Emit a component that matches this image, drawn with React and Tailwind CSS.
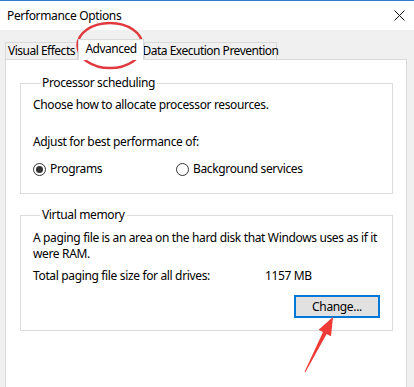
import React from "react";

const Radio = ({ checked, label, className = "" }) => (
  <label className={`flex items-center ${className}`}>
    <span className="w-[13px] h-[13px] rounded-full border border-[#333] bg-white flex items-center justify-center">
      {checked && <span className="w-[7px] h-[7px] rounded-full bg-[#333]"></span>}
    </span>
    <span className="ml-[4px]">{label}</span>
  </label>
);

const Tab = ({ label, active, width }) => (
  <div
    className={
      active
        ? `${width} h-[21px] -mb-px relative z-10 bg-white border border-b-0 border-[#d9d9d9] flex items-start justify-center pt-[1px] whitespace-nowrap tracking-[-0.5px]`
        : `${width} h-[17px] bg-[#f0f0f0] border border-b-0 border-[#d9d9d9] flex items-center justify-center whitespace-nowrap tracking-[-0.5px]`
    }
  >
    {label}
  </div>
);

const App = () => {
  return (
    <div
      className="relative w-[414px] h-[387px] overflow-hidden bg-[#f0f0f0] text-[12px] leading-[16px] tracking-[-0.35px] text-black"
      style={{ fontFamily: '"Noto Sans", "Open Sans", sans-serif' }}
    >
      {/* title bar */}
      <div className="h-[30px] bg-white border-t border-[#2b7bd3] flex items-center justify-between pl-[7px] pr-[9px]">
        <span className="text-[12px] tracking-[-0.35px]">Performance Options</span>
        <svg width="11" height="11" viewBox="0 0 11 11">
          <path d="M0.5 0.5L10.5 10.5M10.5 0.5L0.5 10.5" stroke="#111" strokeWidth="1" />
        </svg>
      </div>

      {/* tabs */}
      <div className="h-[29px] flex items-end pl-[5px]">
        <Tab label="Visual Effects" width="w-[73px]" />
        <Tab label="Advanced" width="w-[66px]" active />
        <Tab label="Data Execution Prevention" width="w-[133px]" />
      </div>

      {/* tab page */}
      <div className="ml-[5px] w-[402px] h-[360px] bg-white border border-[#d9d9d9] px-[14px] pt-[15px]">
        <fieldset className="border border-[#dcdcdc] pl-[12px] pr-[12px] pb-[16px] mr-[-1px]">
          <legend className="ml-[7px] px-[2px]">Processor scheduling</legend>
          <p className="pt-[6px]">Choose how to allocate processor resources.</p>
          <p className="mt-[21px]">Adjust for best performance of:</p>
          <div className="mt-[11px] flex items-center">
            <Radio checked label="Programs" className="w-[143px]" />
            <Radio label="Background services" />
          </div>
        </fieldset>

        <fieldset className="mt-[13px] border border-[#dcdcdc] pl-[12px] pr-[12px] pb-[12px] mr-[-1px]">
          <legend className="ml-[7px] px-[2px]">Virtual memory</legend>
          <p className="pt-[7px] whitespace-nowrap">
            A paging file is an area on the hard disk that Windows uses as if it
            <br />
            were RAM.
          </p>
          <div className="mt-[6px] flex">
            <span className="w-[232px]">Total paging file size for all drives:</span>
            <span>1157 MB</span>
          </div>
          <div className="mt-[11px] flex justify-end">
            <button className="w-[86px] h-[23px] bg-[#e1e1e1] border-2 border-[#0078d7] text-[12px] leading-[16px] tracking-[-0.35px]">
              Change...
            </button>
          </div>
        </fieldset>
      </div>

      {/* annotations */}
      <svg className="absolute left-0 top-0 pointer-events-none" width="414" height="387">
        <ellipse cx="110" cy="45.5" rx="32.5" ry="22.5" fill="none" stroke="#e0393e" strokeWidth="2.5" />
        <polygon
          points="333,317 331,336.2 326.6,333.9 305.4,372.2 304.6,371.8 323,332.1 318.6,329.8"
          fill="#ee3b35"
        />
      </svg>
    </div>
  );
};

export default App;
